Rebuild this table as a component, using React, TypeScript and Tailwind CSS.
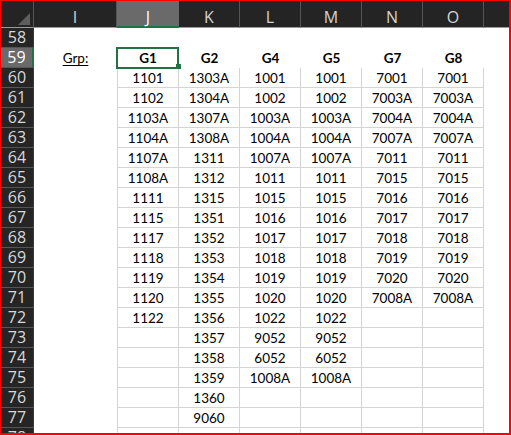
import React from 'react';

const COLS = ['J', 'K', 'L', 'M', 'N', 'O'];
const WIDTHS = ['w-[62px]', 'w-[61px]', 'w-[61px]', 'w-[61px]', 'w-[61px]', 'w-[61px]'];

const GROUPS = ['G1', 'G2', 'G4', 'G5', 'G7', 'G8'];

const g45 = ['1001', '1002', '1003A', '1004A', '1007A', '1011', '1015', '1016', '1017', '1018', '1019', '1020', '1022', '9052', '6052', '1008A'];
const g78 = ['7001', '7003A', '7004A', '7007A', '7011', '7015', '7016', '7017', '7018', '7019', '7020', '7008A'];

// values start at row 60
const DATA: string[][] = [
  ['1101', '1102', '1103A', '1104A', '1107A', '1108A', '1111', '1115', '1117', '1118', '1119', '1120', '1122'],
  ['1303A', '1304A', '1307A', '1308A', '1311', '1312', '1315', '1351', '1352', '1353', '1354', '1355', '1356', '1357', '1358', '1359', '1360', '9060', '9061'],
  g45,
  g45,
  g78,
  g78,
];

function HeaderRow() {
  return (
    <div className="flex h-[27px] shrink-0 bg-[#242424] text-[16px] text-[#d4d4d4] font-['Open_Sans',sans-serif]">
      <div className="relative w-[33px] shrink-0 border-r border-b border-r-[#555555] border-b-[#9b9b9b]">
        <svg className="absolute inset-0" width="33" height="27" viewBox="0 0 33 27">
          <polygon points="29,12 29,24 17,24" fill="#5e5e5e" />
        </svg>
      </div>
      <div className="w-[83px] shrink-0 border-r border-b border-r-[#555555] border-b-[#9b9b9b] text-center pt-[7px] leading-[19px]">
        I
      </div>
      {COLS.map((c, i) => (
        <div
          key={c}
          className={
            c === 'J'
              ? 'w-[62px] shrink-0 bg-[#6a6a6a] text-white border-b-2 border-b-[#217346] text-center pt-[7px] leading-[19px]'
              : `${WIDTHS[i]} shrink-0 border-r border-b border-r-[#555555] border-b-[#9b9b9b] text-center pt-[7px] leading-[19px]`
          }
        >
          {c}
        </div>
      ))}
      <div className="flex-1 border-b border-b-[#9b9b9b]" />
    </div>
  );
}

function SheetRow({ n }: { n: number }) {
  const selected = n === 59;
  const grid = n >= 60;
  return (
    <div className="flex h-[20px] shrink-0">
      <div
        className={
          selected
            ? "w-[33px] shrink-0 bg-[#6a6a6a] text-white border-r-2 border-r-[#217346] border-b border-b-[#555555] text-center text-[16px] leading-[18px] font-['Open_Sans',sans-serif]"
            : "w-[33px] shrink-0 bg-[#252525] text-[#d9d9d9] border-r border-r-[#3a3a3a] border-b border-b-[#555555] text-center text-[16px] leading-[18px] font-['Open_Sans',sans-serif]"
        }
      >
        {n}
      </div>
      <div className="w-[83px] shrink-0 text-center text-[13.5px] leading-[20px]">
        {selected && <span className="underline underline-offset-2">Grp:</span>}
      </div>
      {COLS.map((c, i) => {
        let value = '';
        if (n === 59) value = GROUPS[i];
        else if (n >= 60) value = DATA[i][n - 60] ?? '';
        const border = grid
          ? i === 0
            ? 'border-l border-r border-b border-[#d4d4d4]'
            : 'border-r border-b border-[#d4d4d4]'
          : '';
        return (
          <div
            key={c}
            className={`relative ${WIDTHS[i]} shrink-0 ${border} text-center text-[13.5px] leading-[20px] text-black ${
              n === 59 ? 'font-bold' : ''
            }`}
          >
            {value}
            {selected && c === 'J' && (
              <>
                <div className="absolute -left-[1px] -top-[1px] w-[63px] h-[22px] border-2 border-[#217346] z-10" />
                <div className="absolute left-[59px] top-[16px] w-[5px] h-[5px] bg-[#217346] z-20" />
              </>
            )}
          </div>
        );
      })}
      <div className="flex-1" />
    </div>
  );
}

export default function App() {
  const rows = Array.from({ length: 21 }, (_, i) => 58 + i);
  return (
    <div className="w-[511px] h-[435px] overflow-hidden bg-white border-[#ff0000] border-t border-l border-r-2 border-b-2 flex flex-col font-['Lato',sans-serif]">
      <HeaderRow />
      {rows.map((n) => (
        <SheetRow key={n} n={n} />
      ))}
    </div>
  );
}
